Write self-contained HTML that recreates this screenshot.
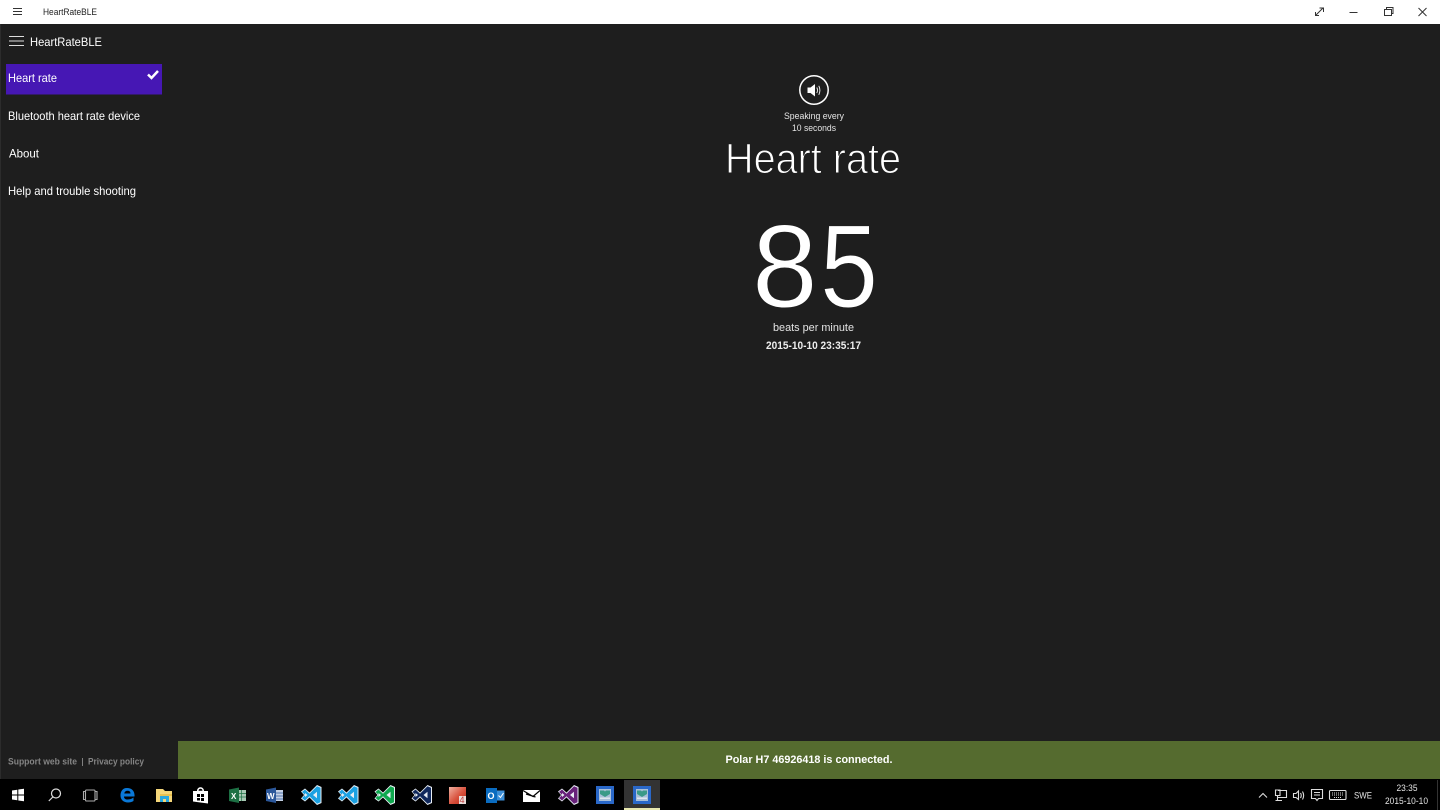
<!DOCTYPE html>
<html><head><meta charset="utf-8"><title>HeartRateBLE</title>
<style>
html,body{margin:0;padding:0;width:1440px;height:810px;overflow:hidden;background:#1e1e1e}
svg{display:block;position:absolute;left:0;top:0;filter:blur(.3px)}
text{font-family:"Liberation Sans",sans-serif;fill:#fff}
</style></head><body>
<svg width="1440" height="810" viewBox="0 0 1440 810" xmlns="http://www.w3.org/2000/svg">
<defs>
<g id="vs"><path d="M-10 -3.500 L-6 -6.500 L-1.500 -2.500 L6 -10 L10.500 -8 L10.500 8 L6 10 L-1.500 2.500 L-6 6.500 L-10 3.500 L-7 0 Z" fill="#e8eef4"/><path d="M-9 -3 L-6 -5.500 L-1.500 -1.300 L6 -8.800 L9.500 -7.300 L9.500 7.300 L6 8.800 L-1.500 1.300 L-6 5.500 L-9 3 L-5.800 0 Z M2 0 L6 3.200 L6 -3.200 Z M-6 -2 L-3.500 0 L-6 2 Z" fill-rule="evenodd"/></g>
<g id="hr"><rect x="-9" y="-9" width="18" height="18" fill="#2a68c8"/><rect x="-6" y="-6" width="12" height="12" fill="#a9bfd8"/><path d="M-5 -4.500 H-1 L0 -3.500 L1 -4.500 H5 V-1 L0 2 L-5 -1 Z" fill="#3a9a88"/><rect x="-5" y="2.500" width="10" height="1.500" fill="#dde6ee"/></g>
<linearGradient id="p4" x1="0" y1="0" x2="1" y2="1"><stop offset="0" stop-color="#f0b0a0"/><stop offset=".55" stop-color="#d8503c"/><stop offset="1" stop-color="#b82818"/></linearGradient>
</defs>
<!-- backgrounds -->
<rect width="1440" height="810" fill="#1e1e1e"/>
<rect x="0" y="24" width="1" height="755" fill="#2c2c2c"/>
<rect x="0" y="0" width="1440" height="24" fill="#fff"/>
<rect x="178" y="741" width="1262" height="38" fill="#556b2f"/>
<rect x="0" y="779" width="1440" height="31" fill="#000"/>

<!-- title bar -->
<g stroke="#333" stroke-width="1"><path d="M13 8.500H22M13 11.500H22M13 14.500H22"/></g>
<text x="43" y="15" font-size="9.500" textLength="54" lengthAdjust="spacingAndGlyphs" style="fill:#222">HeartRateBLE</text>
<g stroke="#333" stroke-width="1" fill="none">
<path d="M1316 15L1323 8M1319.500 8H1323.500V12M1315.500 12V15.500H1319"/>
<path d="M1349.500 12.500H1357.500"/>
<path d="M1384.500 9.500H1391.500V15.500H1384.500ZM1386.500 9.500V7.500H1393V13.500H1391.500"/>
<path d="M1418.500 8L1426.500 16M1426.500 8L1418.500 16"/>
</g>

<!-- sidebar -->
<g stroke="#ddd" stroke-width="1"><path d="M9 36.500H24M9 41H24M9 45.500H24"/></g>
<text x="30" y="46" font-size="12" textLength="72" lengthAdjust="spacingAndGlyphs">HeartRateBLE</text>
<rect x="6" y="64" width="156" height="30.500" fill="#4617b4"/>
<path d="M148 74.500L151.500 78L158 71" stroke="#fff" stroke-width="2.500" fill="none"/>
<text x="8" y="82" font-size="12" textLength="49" lengthAdjust="spacingAndGlyphs">Heart rate</text>
<text x="8" y="120" font-size="12" textLength="132" lengthAdjust="spacingAndGlyphs">Bluetooth heart rate device</text>
<text x="9" y="157.500" font-size="12" textLength="30" lengthAdjust="spacingAndGlyphs">About</text>
<text x="8" y="195" font-size="12" textLength="128" lengthAdjust="spacingAndGlyphs">Help and trouble shooting</text>
<text x="8" y="764.500" font-size="9.500" textLength="69" lengthAdjust="spacingAndGlyphs" style="fill:#858585;font-weight:bold">Support web site</text>
<text x="88" y="764.500" font-size="9.500" textLength="56" lengthAdjust="spacingAndGlyphs" style="fill:#858585;font-weight:bold">Privacy policy</text>
<rect x="82" y="758" width="1" height="8" fill="#808080"/>

<!-- speaker -->
<circle cx="814" cy="90" r="14.200" fill="none" stroke="#fff" stroke-width="1.500"/>
<path d="M807.500 87.500H810.500L815 84V96.500L810.500 93H807.500Z" fill="#fff"/>
<path d="M816.800 87.500Q818.200 90.200 816.800 93M818.800 85.800Q821 90.200 818.800 94.800" fill="none" stroke="#fff" stroke-width="0.900"/>
<text x="784" y="119" font-size="9.500" textLength="60" lengthAdjust="spacingAndGlyphs" style="fill:#e4e4e4">Speaking every</text>
<text x="792" y="131" font-size="9.500" textLength="44" lengthAdjust="spacingAndGlyphs" style="fill:#e4e4e4">10 seconds</text>

<!-- main -->
<text x="725" y="173" font-size="43" textLength="176" lengthAdjust="spacingAndGlyphs" style="stroke:#1e1e1e;stroke-width:1.100px">Heart rate</text>
<text x="752" y="307" font-size="118" style="stroke:#1e1e1e;stroke-width:1px">8</text>
<text x="820" y="307" font-size="118" textLength="58" lengthAdjust="spacingAndGlyphs" style="stroke:#1e1e1e;stroke-width:1px">5</text>
<text x="773" y="331" font-size="11" textLength="81" lengthAdjust="spacingAndGlyphs" style="fill:#e4e4e4">beats per minute</text>
<text x="766" y="349" font-size="11" textLength="95" lengthAdjust="spacingAndGlyphs" style="font-weight:bold;fill:#eee">2015-10-10 23:35:17</text>
<text x="725.500" y="763" font-size="11" textLength="167" lengthAdjust="spacingAndGlyphs" style="font-weight:bold">Polar H7 46926418 is connected.</text>

<!-- taskbar -->
<rect x="624" y="780" width="36" height="30" fill="#333"/>
<rect x="624" y="808" width="36" height="2" fill="#e8e8b0"/>
<!-- start -->
<path d="M12 790.500L17.300 789.700V794.500H12ZM18.300 789.500L24 788.700V794.500H18.300ZM12 795.500H17.300V800.300L12 799.500ZM18.300 795.500H24V801.300L18.300 800.500Z" fill="#fff"/>
<!-- search -->
<g fill="none" stroke="#ddd" stroke-width="1.200"><circle cx="56" cy="793.500" r="4.500"/><path d="M52.800 797L48.800 801"/></g>
<!-- task view -->
<g fill="none" stroke="#aaa" stroke-width="1.100"><rect x="85.500" y="790" width="9.500" height="11" rx="1"/><path d="M85.500 791.500H83.500V799.500H85.500M95 791.500H97V799.500H95"/></g>
<!-- edge -->
<path d="M127 788C122 788 120.500 792 120.500 795.500C120.500 800 124 802.500 128 802.500C130 802.500 132 802 133.500 801V797.500C131.500 799 129.500 799.500 127.500 799.500C125.500 799.500 124 798.500 124 796.500H134.500C135 791.500 132 788 127 788ZM124.300 793.500C124.700 791.500 126 790.800 127.500 790.800C129.300 790.800 130.500 791.700 130.500 793.500Z" fill="#0a78d7" fill-rule="evenodd"/>
<!-- explorer -->
<path d="M156 789H163L165 791H172V802H156Z" fill="#f4d67a"/><rect x="160" y="794" width="12" height="2" fill="#e8c050"/><rect x="160" y="796" width="9" height="6" fill="#29a8e0"/><rect x="163" y="799" width="3" height="3" fill="#f4d67a"/>
<!-- store -->
<path d="M193 791H197C197 786 204 786 204 791H208V803.500L193 801.500Z" fill="#fff"/><path d="M198.500 790.800C198.500 788 202.500 788 202.500 790.800Z" fill="#000"/><path d="M197 794H200V797H197ZM201 794H204V797H201ZM197 798H200V800.500H197ZM201 798H204V801H201Z" fill="#000"/>
<!-- excel -->
<path d="M229 789.500L239 787.500V803L229 801Z" fill="#1d7044"/><rect x="239" y="790" width="7" height="11" fill="#a8c8b4"/><path d="M241.500 790V801M239 793.500H246M239 797H246" stroke="#1d7044" stroke-width=".7"/><text x="231" y="799" font-size="8" style="font-weight:bold">X</text>
<!-- word -->
<path d="M266 789.500L276 787.500V803L266 801Z" fill="#2b579a"/><rect x="276" y="790" width="7" height="11" fill="#c4d0e4"/><path d="M276 793H283M276 796H283M276 799H283" stroke="#2b579a" stroke-width=".7"/><text x="267" y="799" font-size="8" style="font-weight:bold">W</text>
<!-- VS icons -->
<use href="#vs" x="311" y="795" fill="#1ba1e2"/>
<use href="#vs" x="348" y="795" fill="#1ba1e2"/>
<use href="#vs" x="384.500" y="795" fill="#0fa84e"/>
<use href="#vs" x="421.500" y="795" fill="#10285c"/>
<!-- P4 -->
<rect x="449" y="787" width="17" height="17" fill="url(#p4)"/><path d="M459 796H466V804H459Z" fill="#eadcd8"/><text x="459.500" y="803" font-size="9" style="fill:#c04040">4</text>
<!-- outlook -->
<rect x="486" y="788" width="11" height="15" fill="#0a6cc0"/><rect x="497" y="790.500" width="7.500" height="10" fill="#3c8fd8"/><path d="M498.500 795.500L500.500 797.500L503.500 793" stroke="#fff" fill="none"/><text x="487.500" y="799" font-size="9" style="font-weight:bold">O</text>
<!-- mail -->
<path d="M523 790H540V802H523Z" fill="#fff"/><path d="M523 790.500L533 796.500L540 790.500M526 794L535.500 797" fill="none" stroke="#000" stroke-width="1.200"/>
<!-- VS purple -->
<use href="#vs" x="568" y="795" fill="#68217a"/>
<!-- heart apps -->
<use href="#hr" x="605" y="795"/>
<use href="#hr" x="642" y="795"/>

<!-- tray -->
<g fill="none" stroke="#ddd" stroke-width="1.100">
<path d="M1259 797.500L1263 793.500L1267 797.500"/>
<path d="M1278 790.500H1286.500V797.500H1278M1275.500 790V795.500H1280V790ZM1277.500 795.500V800.500M1275.500 800.500H1282"/>
<path d="M1293.500 793.500H1296L1298.500 791V799.500L1296 797.500H1293.500ZM1300.500 793Q1302 795.500 1300.500 798M1302.500 791.500Q1304.800 795.500 1302.500 799.500"/>
<path d="M1311.500 789.500H1322.500V798.500H1318.500L1317 800.500L1315.500 798.500H1311.500ZM1314 792.500H1320M1314 795H1320"/>
<rect x="1329.500" y="790.500" width="16.500" height="9" rx="1"/>
<path d="M1332 793H1344M1332 795H1344M1334 797.500H1342" stroke-dasharray="1 1"/>
</g>
<text x="1354" y="798.500" font-size="9" textLength="18" lengthAdjust="spacingAndGlyphs" style="fill:#e4e4e4">SWE</text>
<text x="1396.500" y="791" font-size="9" textLength="21" lengthAdjust="spacingAndGlyphs" style="fill:#e4e4e4">23:35</text>
<text x="1385" y="804" font-size="9" textLength="43" lengthAdjust="spacingAndGlyphs" style="fill:#e4e4e4">2015-10-10</text>
<rect x="1437" y="780" width="1" height="30" fill="#333"/>
</svg>
</body></html>
